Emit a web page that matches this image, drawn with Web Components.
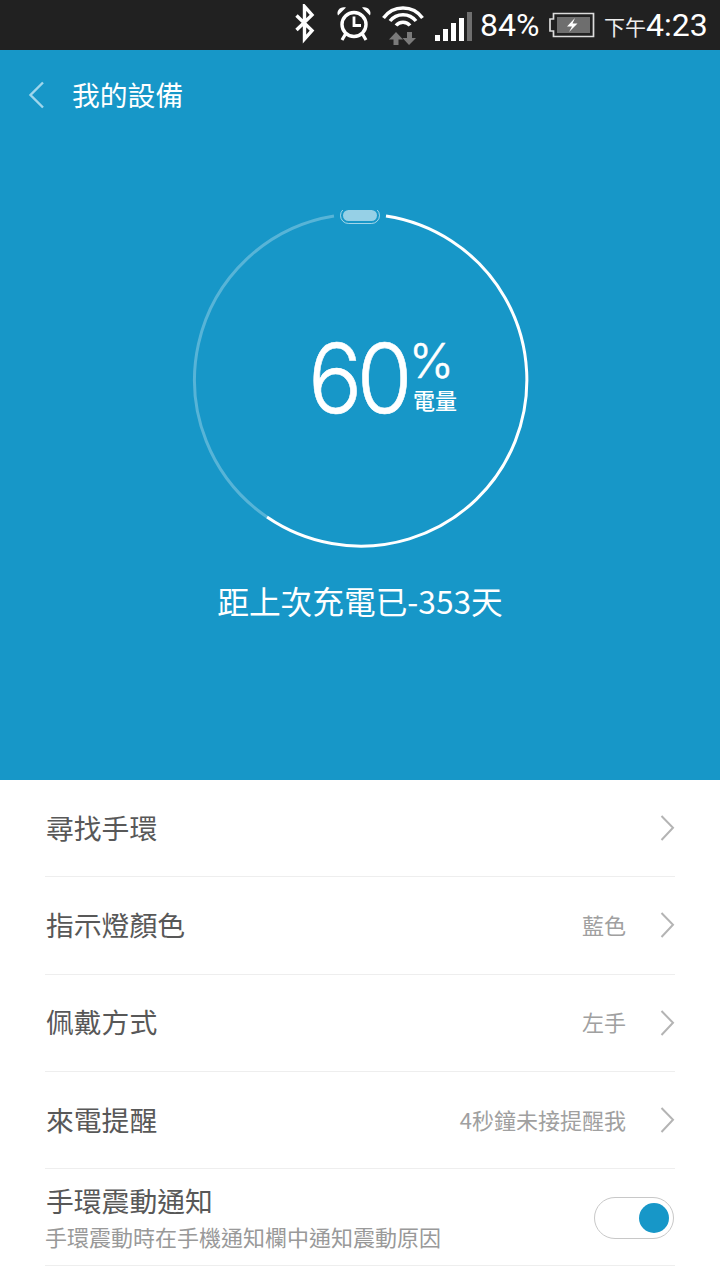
<!DOCTYPE html>
<html lang="zh-Hant"><head><meta charset="utf-8"><title>我的設備</title>
<style>
html,body{margin:0;padding:0;background:#fff}
body{width:720px;height:1280px;overflow:hidden;font-family:"Noto Sans CJK TC","Noto Sans CJK SC",Roboto,sans-serif}
</style></head><body>
<status-bar></status-bar>
<device-hero title-text="我的設備" caption="距上次充電已-353天"><battery-gauge value="60" label="電量"></battery-gauge></device-hero>
<setting-list>
<list-row label="尋找手環"></list-row>
<list-row label="指示燈顏色" value="藍色"></list-row>
<list-row label="佩戴方式" value="左手"></list-row>
<list-row label="來電提醒" value="4秒鐘未接提醒我"></list-row>
<list-row label="手環震動通知" sub="手環震動時在手機通知欄中通知震動原因"><toggle-switch></toggle-switch></list-row>
</setting-list>
<script>
function def(name,html){
  customElements.define(name,class extends HTMLElement{
    constructor(){super();this.attachShadow({mode:'open'});}
    connectedCallback(){
      this.shadowRoot.innerHTML=typeof html==='function'?html(this):html;
    }
  });
}
def('status-bar',`<style>
:host{display:flex;align-items:flex-start;height:50px;background:#212121;color:#fff;font-family:Roboto,sans-serif;box-sizing:border-box;padding-left:295px}
svg{display:block;flex:none}
.t{font-size:32px;line-height:50px;white-space:nowrap}
.cjk{font:21px/50px "Noto Sans CJK TC",sans-serif;margin-top:1px;color:#eee}
</style>
<svg width="20" height="40" viewBox="0 0 20 40" style="margin-top:4px"><path d="M1.500 11.500 17 26.500 9.500 35V2.500L17 11 1.500 26" fill="none" stroke="#fff" stroke-width="3.400"/></svg>
<svg width="36" height="38" viewBox="0 0 36 38" style="margin:5px 0 0 21px"><circle cx="18" cy="19.500" r="12" fill="none" stroke="#fff" stroke-width="3.400"/><path d="M18 11.500V20.500H25" fill="none" stroke="#fff" stroke-width="2.800"/><path d="M2 10.500C0 6 4 1 10 2.500ZM34 10.500c2-4.500-2-9.500-8-8Z" fill="#fff"/><path d="M9.500 29l-3.500 6M26.500 29l3.500 6" stroke="#fff" stroke-width="3.200"/></svg>
<svg width="42" height="42" viewBox="0 0 42 42" style="margin:4px 0 0 10px"><g fill="none" stroke="#fff" stroke-width="3.500"><path d="M1.500 14A24 24 0 0 1 40.500 14"/><path d="M8 17A16.500 16.500 0 0 1 34 17"/><path d="M14 21.500A9 9 0 0 1 28 21.500"/></g><path d="M14 28l7 7.500h-4.500V41h-5V35.500H7ZM27 41l-6.500-7H25V28h5v6h4Z" fill="#7a7a7a"/></svg>
<svg width="38" height="30" viewBox="0 0 38 30" style="margin:12px 0 0 11px"><path fill="#fff" d="M0 23h5v6H0zM8 17h5v12H8zM16 11h5v18h-5zM24 6h5v23h-5z"/><path fill="#6f6f6f" d="M32 0h5v29h-5z"/></svg>
<span class="t" style="margin-left:7px;width:69px">84%</span>
<svg width="46" height="26" viewBox="0 0 46 26" style="margin:12px 0 0 0"><path d="M4.500 1.500h40v23h-40V19H1V7H4.500Z" fill="#212121" stroke="#dcdcdc" stroke-width="1.700"/><rect x="8" y="5" width="33" height="16" fill="#6e6e6e"/><path d="M26 6l-8 8.500h5L20 20l8.500-8.500h-5Z" fill="#fff"/></svg>
<span class="cjk" style="margin-left:9px">下午</span><span class="t">4:23</span>`);

def('device-hero',h=>`<style>
:host{display:flex;flex-direction:column;align-items:center;height:730px;background:#1797c8;color:#fff}
.nav{align-self:stretch;display:flex;align-items:center;height:90px;padding-left:28px}
.nav svg{display:block}
.nav span{font-size:27.800px;line-height:40px;margin:-2px 0 0 27px}
.g{margin-top:70px;display:block}
.cap{font-size:31.700px;line-height:44px;margin-top:28px;white-space:nowrap}
</style>
<div class="nav"><svg width="17" height="28" viewBox="0 0 17 28"><path d="M15 1.500 2.500 14 15 26.500" fill="none" stroke="#9fd6ec" stroke-width="2.400"/></svg><span>${h.getAttribute('title-text')}</span></div>
<div class="g"><slot></slot></div>
<div class="cap">${h.getAttribute('caption')}</div>`);

def('battery-gauge',h=>`<style>
:host{display:block;position:relative;width:340px;height:340px}
svg{display:block}
.n{position:absolute;left:118px;top:112px;font:300 96px/112px Inter,Roboto,sans-serif;letter-spacing:-6px;transform:scaleX(.94);transform-origin:0 50%;-webkit-text-stroke:.6px #fff}
.p{position:absolute;left:219px;top:123px;font:300 48px/56px Inter,Roboto,sans-serif;-webkit-text-stroke:.5px #fff}
.l{position:absolute;left:223px;top:174px;font:500 22px/30px "Noto Sans CJK TC",sans-serif}
</style>
<svg width="340" height="340" viewBox="190 210 340 340">
<path d="M267 517A166 166 0 0 1 334 216" fill="none" stroke="#fff" stroke-opacity=".28" stroke-width="3"/>
<path d="M386 216A166 166 0 1 1 267 517" fill="none" stroke="#fff" stroke-width="3"/>
<rect x="340.500" y="207.500" width="39" height="16" rx="8" fill="none" stroke="#fff" stroke-opacity=".6"/>
<rect x="343" y="210" width="34" height="11" rx="5.500" fill="#fff" fill-opacity=".55"/>
</svg>
<div class="n">${h.getAttribute('value')}</div><div class="p">%</div><div class="l">${h.getAttribute('label')}</div>`);

def('setting-list',`<style>:host{display:flex;flex-direction:column;padding:0 45px;background:#fff}</style><slot></slot>`);

def('list-row',h=>{
 const sub=h.getAttribute('sub'),val=h.getAttribute('value');
 return `<style>
:host{display:flex;align-items:center;height:97.300px;box-sizing:border-box;border-bottom:1px solid #eee;color:#585858}
.m{flex:1;min-width:0;padding-left:1px;margin-bottom:3px}
.m.two{margin-bottom:4px}
.a{font-size:27.800px;line-height:40px}
.two .a{line-height:42px}
.s{font-size:22px;line-height:30px;color:#999;margin-left:-1px}
.v{font-size:22px;line-height:30px;color:#a0a0a0;margin:0 33px 3px 0}
svg{display:block;flex:none}
::slotted(*){margin:2px 1px 0 0}
</style>
<div class="m ${sub?'two':''}"><div class="a">${h.getAttribute('label')}</div>${sub?`<div class="s">${sub}</div>`:''}</div>
${val?`<div class="v">${val}</div>`:''}
${sub?'<slot></slot>':`<svg width="16" height="28" viewBox="0 0 16 28"><path d="M2.500 2 14 13.800 2.500 26" fill="none" stroke="#b4b4b4" stroke-width="2"/></svg>`}`});

def('toggle-switch',`<style>
:host{display:flex;align-items:center;justify-content:flex-end;width:80px;height:42px;box-sizing:border-box;border:1px solid #c8c8c8;border-radius:21px;padding-right:4px;background:#fff}
i{display:block;width:30px;height:30px;border-radius:50%;background:#1797c8;margin-bottom:1px}
</style><i></i>`);
</script>
</body></html>
